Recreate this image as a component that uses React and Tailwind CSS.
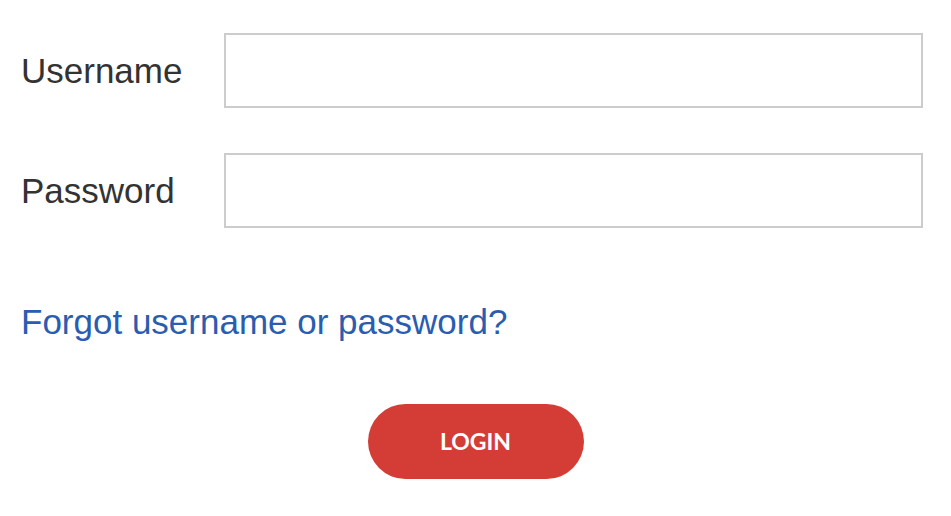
export default function App() {
  return (
    <div className="min-h-screen w-full bg-white pt-[33px] font-['Liberation_Sans',Arial,sans-serif]">
      <div className="pl-[21px] pr-[28px]">
        <div className="flex items-center">
          <label className="w-[203px] text-[35px] leading-none text-[#333]">Username</label>
          <input
            type="text"
            className="h-[75px] flex-1 border-2 border-[#cccccc] bg-white px-3 outline-none"
          />
        </div>
        <div className="mt-[45px] flex items-center">
          <label className="w-[203px] text-[35px] leading-none text-[#333]">Password</label>
          <input
            type="password"
            className="h-[75px] flex-1 border-2 border-[#cccccc] bg-white px-3 outline-none"
          />
        </div>
        <div className="mt-[73px] flex h-[40px] items-center">
          <a href="#" className="text-[35px] leading-none text-[#2a5db0]">
            Forgot username or password?
          </a>
        </div>
      </div>
      <div className="mt-[63px] flex justify-center">
        <button className="h-[75px] w-[216px] rounded-full bg-[#d43c36] font-['Lato',sans-serif] text-[23px] font-bold text-white">
          LOGIN
        </button>
      </div>
    </div>
  );
}
